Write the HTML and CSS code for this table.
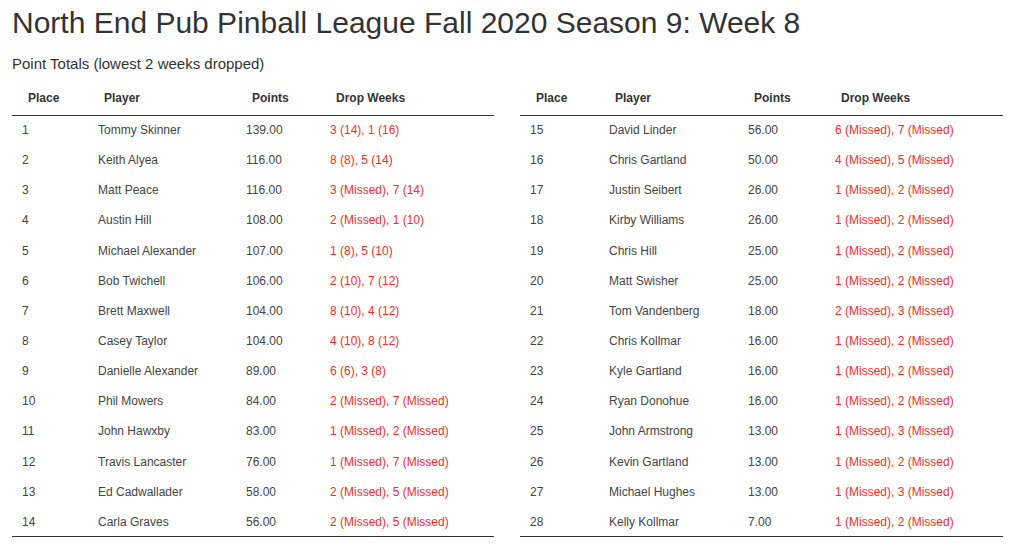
FILE: index.html
```html
<!DOCTYPE html>
<html>
<head>
<meta charset="utf-8">
<link rel="stylesheet" href="styles.css">
</head>
<body>
<h1 class="title">North End Pub Pinball League Fall 2020 Season 9: Week 8</h1>
<p class="subtitle">Point Totals (lowest 2 weeks dropped)</p>
<div class="tables">
<table class="standings left">
<thead><tr><th class="c-place">Place</th><th class="c-player">Player</th><th class="c-points">Points</th><th class="c-drop">Drop Weeks</th></tr></thead>
<tbody>
<tr><td>1</td><td>Tommy Skinner</td><td>139.00</td><td class="drop">3 (14), 1 (16)</td></tr>
<tr><td>2</td><td>Keith Alyea</td><td>116.00</td><td class="drop">8 (8), 5 (14)</td></tr>
<tr><td>3</td><td>Matt Peace</td><td>116.00</td><td class="drop">3 (Missed), 7 (14)</td></tr>
<tr><td>4</td><td>Austin Hill</td><td>108.00</td><td class="drop">2 (Missed), 1 (10)</td></tr>
<tr><td>5</td><td>Michael Alexander</td><td>107.00</td><td class="drop">1 (8), 5 (10)</td></tr>
<tr><td>6</td><td>Bob Twichell</td><td>106.00</td><td class="drop">2 (10), 7 (12)</td></tr>
<tr><td>7</td><td>Brett Maxwell</td><td>104.00</td><td class="drop">8 (10), 4 (12)</td></tr>
<tr><td>8</td><td>Casey Taylor</td><td>104.00</td><td class="drop">4 (10), 8 (12)</td></tr>
<tr><td>9</td><td>Danielle Alexander</td><td>89.00</td><td class="drop">6 (6), 3 (8)</td></tr>
<tr><td>10</td><td>Phil Mowers</td><td>84.00</td><td class="drop">2 (Missed), 7 (Missed)</td></tr>
<tr><td>11</td><td>John Hawxby</td><td>83.00</td><td class="drop">1 (Missed), 2 (Missed)</td></tr>
<tr><td>12</td><td>Travis Lancaster</td><td>76.00</td><td class="drop">1 (Missed), 7 (Missed)</td></tr>
<tr><td>13</td><td>Ed Cadwallader</td><td>58.00</td><td class="drop">2 (Missed), 5 (Missed)</td></tr>
<tr><td>14</td><td>Carla Graves</td><td>56.00</td><td class="drop">2 (Missed), 5 (Missed)</td></tr>
</tbody>
</table>
<table class="standings right">
<thead><tr><th class="c-place">Place</th><th class="c-player">Player</th><th class="c-points">Points</th><th class="c-drop">Drop Weeks</th></tr></thead>
<tbody>
<tr><td>15</td><td>David Linder</td><td>56.00</td><td class="drop">6 (Missed), 7 (Missed)</td></tr>
<tr><td>16</td><td>Chris Gartland</td><td>50.00</td><td class="drop">4 (Missed), 5 (Missed)</td></tr>
<tr><td>17</td><td>Justin Seibert</td><td>26.00</td><td class="drop">1 (Missed), 2 (Missed)</td></tr>
<tr><td>18</td><td>Kirby Williams</td><td>26.00</td><td class="drop">1 (Missed), 2 (Missed)</td></tr>
<tr><td>19</td><td>Chris Hill</td><td>25.00</td><td class="drop">1 (Missed), 2 (Missed)</td></tr>
<tr><td>20</td><td>Matt Swisher</td><td>25.00</td><td class="drop">1 (Missed), 2 (Missed)</td></tr>
<tr><td>21</td><td>Tom Vandenberg</td><td>18.00</td><td class="drop">2 (Missed), 3 (Missed)</td></tr>
<tr><td>22</td><td>Chris Kollmar</td><td>16.00</td><td class="drop">1 (Missed), 2 (Missed)</td></tr>
<tr><td>23</td><td>Kyle Gartland</td><td>16.00</td><td class="drop">1 (Missed), 2 (Missed)</td></tr>
<tr><td>24</td><td>Ryan Donohue</td><td>16.00</td><td class="drop">1 (Missed), 2 (Missed)</td></tr>
<tr><td>25</td><td>John Armstrong</td><td>13.00</td><td class="drop">1 (Missed), 3 (Missed)</td></tr>
<tr><td>26</td><td>Kevin Gartland</td><td>13.00</td><td class="drop">1 (Missed), 2 (Missed)</td></tr>
<tr><td>27</td><td>Michael Hughes</td><td>13.00</td><td class="drop">1 (Missed), 3 (Missed)</td></tr>
<tr><td>28</td><td>Kelly Kollmar</td><td>7.00</td><td class="drop">1 (Missed), 2 (Missed)</td></tr>
</tbody>
</table>
</div>
</body>
</html>
```
FILE: styles.css
```css
html, body {
  margin: 0;
  padding: 0;
  background: #fff;
}
body {
  font-family: "Liberation Sans", Arial, sans-serif;
  color: #333;
  padding: 0 12px;
}
.title {
  font-size: 30px;
  font-weight: normal;
  line-height: 33px;
  margin: 6px 0 0 0;
}
.subtitle {
  font-size: 15px;
  line-height: 20px;
  margin: 15px 0 0 0;
}
.tables {
  display: flex;
  gap: 26px;
  margin-top: 7px;
}
.standings {
  border-collapse: collapse;
  table-layout: fixed;
  font-size: 12px;
  border-bottom: 1px solid #333;
}
.standings th,
.standings td {
  box-sizing: border-box;
}
.standings.left { width: 482px; }
.standings.right { width: 483px; }
.standings th {
  font-weight: bold;
  text-align: left;
  height: 34px;
  padding: 0 0 0 16px;
  border-bottom: 1px solid #333;
  vertical-align: middle;
}
.standings td {
  height: 30.15px;
  padding: 0 0 0 10px;
  vertical-align: middle;
  white-space: nowrap;
  color: #444;
}
.standings td.drop { color: #ff2a2a; }
.left .c-place { width: 76px; }
.left .c-player { width: 148px; }
.left .c-points { width: 84px; }
.left .c-drop { width: 174px; }
.right .c-place { width: 79px; }
.right .c-player { width: 139px; }
.right .c-points { width: 87px; }
.right .c-drop { width: 178px; }
```
